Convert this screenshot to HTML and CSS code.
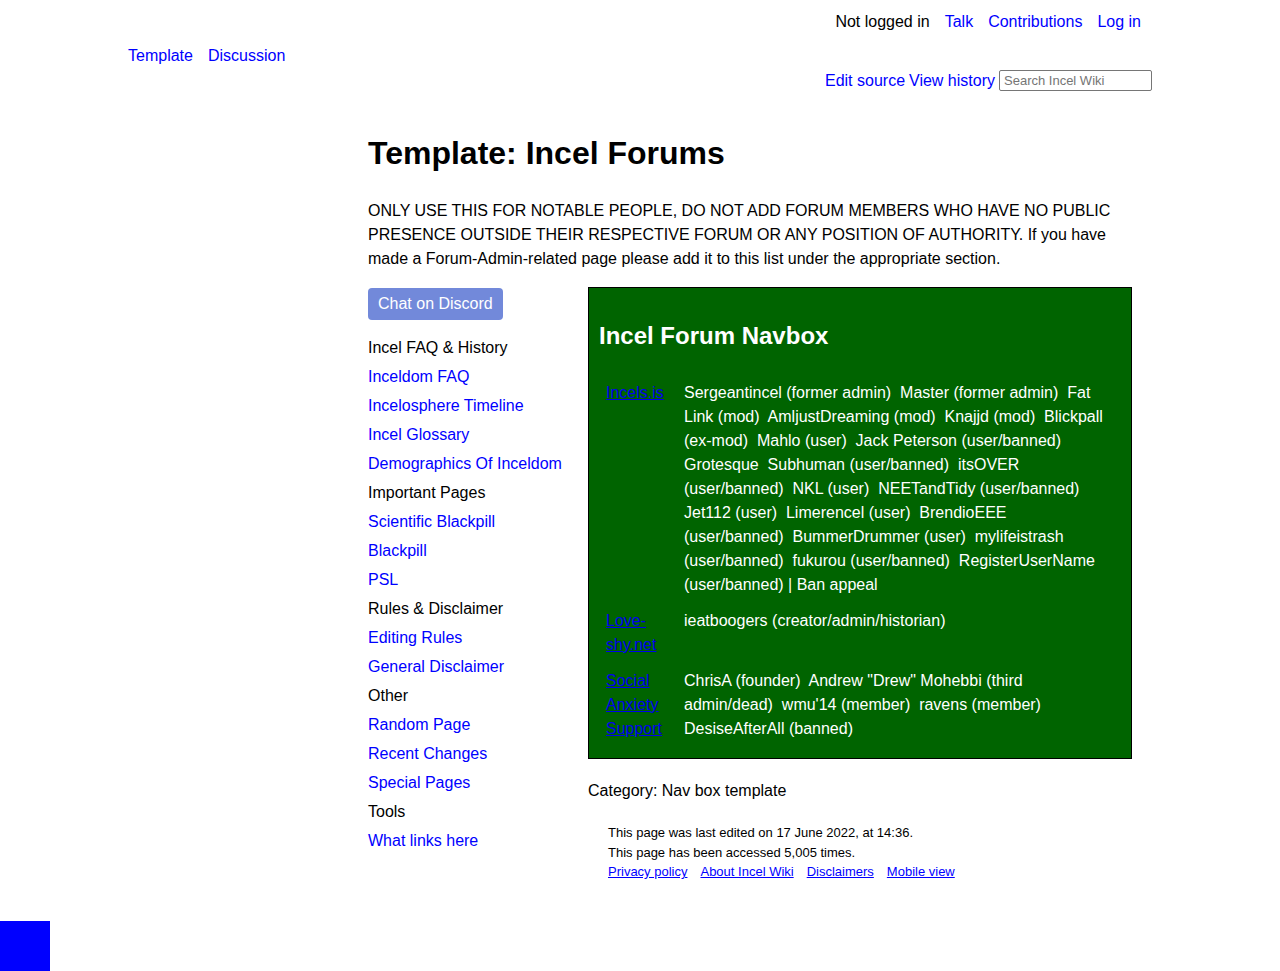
FILE: index.html
```html
<!DOCTYPE html>
<html lang="en">
<head>
<meta charset="utf-8">
<title>Template: Incel Forums - Incel Wiki</title>
<link rel="stylesheet" href="styles.css">
</head>
<body>
<div class="page">
  <header class="header">
    <ul class="user-links">
      <li class="plain">Not logged in</li>
      <li><a href="#">Talk</a></li>
      <li><a href="#">Contributions</a></li>
      <li><a href="#">Log in</a></li>
    </ul>
    <ul class="ns-links">
      <li><a href="#">Template</a></li>
      <li><a href="#">Discussion</a></li>
    </ul>
    <div class="actions">
      <a href="#">Edit source</a> <a href="#">View history</a>
      <input class="search" type="text" placeholder="Search Incel Wiki">
    </div>
  </header>

  <main class="content">
    <h1 class="title">Template: Incel Forums</h1>
    <p class="intro">ONLY USE THIS FOR NOTABLE PEOPLE, DO NOT ADD FORUM MEMBERS WHO HAVE NO PUBLIC PRESENCE OUTSIDE THEIR RESPECTIVE FORUM OR ANY POSITION OF AUTHORITY. If you have made a Forum-Admin-related page please add it to this list under the appropriate section.</p>

    <div class="columns">
      <nav class="sidebar">
        <a class="discord" href="#">Chat on Discord</a>
        <ul class="side-list">
          <li class="head">Incel FAQ &amp; History</li>
          <li><a href="#">Inceldom FAQ</a></li>
          <li><a href="#">Incelosphere Timeline</a></li>
          <li><a href="#">Incel Glossary</a></li>
          <li><a href="#">Demographics Of Inceldom</a></li>
          <li class="head">Important Pages</li>
          <li><a href="#">Scientific Blackpill</a></li>
          <li><a href="#">Blackpill</a></li>
          <li><a href="#">PSL</a></li>
          <li class="head">Rules &amp; Disclaimer</li>
          <li><a href="#">Editing Rules</a></li>
          <li><a href="#">General Disclaimer</a></li>
          <li class="head">Other</li>
          <li><a href="#">Random Page</a></li>
          <li><a href="#">Recent Changes</a></li>
          <li><a href="#">Special Pages</a></li>
          <li class="head">Tools</li>
          <li><a href="#">What links here</a></li>
        </ul>
      </nav>

      <div class="main">
        <div class="navbox">
          <h2 class="navbox-title">Incel Forum Navbox</h2>
          <table class="navbox-table">
            <tr>
              <td class="label"><a href="#">Incels.is</a></td>
              <td class="list">Sergeantincel (former admin)&nbsp; Master (former admin)&nbsp; Fat Link (mod)&nbsp; AmljustDreaming (mod)&nbsp; Knajjd (mod)&nbsp; Blickpall (ex-mod)&nbsp; Mahlo (user)&nbsp; Jack Peterson (user/banned)&nbsp; Grotesque&nbsp; Subhuman (user/banned)&nbsp; itsOVER (user/banned)&nbsp; NKL (user)&nbsp; NEETandTidy (user/banned)&nbsp; Jet112 (user)&nbsp; Limerencel (user)&nbsp; BrendioEEE (user/banned)&nbsp; BummerDrummer (user)&nbsp; mylifeistrash (user/banned)&nbsp; fukurou (user/banned)&nbsp; RegisterUserName (user/banned) | Ban appeal</td>
            </tr>
            <tr>
              <td class="label"><a href="#">Love-shy.net</a></td>
              <td class="list">ieatboogers (creator/admin/historian)</td>
            </tr>
            <tr>
              <td class="label"><a href="#">Social Anxiety Support</a></td>
              <td class="list">ChrisA (founder)&nbsp; Andrew "Drew" Mohebbi (third admin/dead)&nbsp; wmu'14 (member)&nbsp; ravens (member)&nbsp; DesiseAfterAll (banned)</td>
            </tr>
          </table>
        </div>

        <div class="category">Category: Nav box template</div>

        <footer class="footer">
          <div>This page was last edited on 17 June 2022, at 14:36.</div>
          <div>This page has been accessed 5,005 times.</div>
          <div class="footer-links">
            <a href="#">Privacy policy</a>
            <a href="#">About Incel Wiki</a>
            <a href="#">Disclaimers</a>
            <a href="#">Mobile view</a>
          </div>
        </footer>
      </div>
    </div>
  </main>
</div>
<a class="corner" href="#" aria-label="Top"></a>
</body>
</html>
```

FILE: styles.css
```css
html, body {
  margin: 0;
  padding: 0;
  background: #ffffff;
}

body {
  font-family: "Liberation Sans", Arial, sans-serif;
  font-size: 16px;
  color: #000000;
}

a {
  color: #0000ff;
  text-decoration: none;
}

ul {
  list-style: none;
  margin: 0;
  padding: 0;
}

.page {
  width: 1024px;
  margin: 0 auto;
}

/* Header */
.header {
  display: flex;
  flex-direction: column;
  padding-top: 1px;
}

.user-links {
  display: flex;
  justify-content: flex-end;
  gap: 15px;
  height: 42px;
  line-height: 42px;
  padding-right: 11px;
}

.ns-links {
  display: flex;
  gap: 15px;
  height: 26px;
  line-height: 26px;
}

.actions {
  display: flex;
  justify-content: flex-end;
  align-items: center;
  gap: 4px;
  height: 24px;
  line-height: 24px;
  white-space: pre;
}

.search {
  width: 153px;
  height: 21px;
  box-sizing: border-box;
  border: 1px solid #767676;
  border-radius: 2px;
  padding: 1px 4px;
  font-family: "Liberation Sans", Arial, sans-serif;
  font-size: 13px;
  margin: -1px 0 0;
}

.search::placeholder {
  color: #757575;
}

/* Content */
.content {
  margin-left: 240px;
  width: 764px;
}

.title {
  font-size: 32px;
  line-height: 40px;
  font-weight: bold;
  margin: 40px 0 26px;
}

.intro {
  line-height: 24px;
  margin: 0 0 16px;
}

.columns {
  display: flex;
  align-items: flex-start;
}

.sidebar {
  width: 220px;
  flex: none;
  display: flex;
  flex-direction: column;
  align-items: flex-start;
  padding-top: 1px;
}

.discord {
  display: block;
  background: #7289da;
  color: #ffffff;
  border-radius: 4px;
  height: 32px;
  line-height: 32px;
  padding: 0 10px;
}

.side-list {
  margin-top: 13px;
}

.side-list li {
  line-height: 29px;
  height: 29px;
}

.main {
  width: 544px;
  flex: none;
}

.navbox {
  background: #006400;
  border: 1px solid #000000;
  padding: 10px;
  color: #ffffff;
}

.navbox-title {
  font-size: 24px;
  line-height: 28px;
  font-weight: bold;
  margin: 24px 0 24px;
}

.navbox-table {
  border-spacing: 2px;
  border-collapse: separate;
  width: 100%;
}

.navbox-table td {
  padding: 5px;
  vertical-align: top;
  line-height: 24px;
  color: #ffffff;
}

.navbox-table td.label {
  width: 66px;
}

.navbox-table td.list {
  padding-right: 11px;
}

.navbox-table td.label a {
  color: #0000ee;
  text-decoration: underline;
}

.category {
  line-height: 24px;
  margin-top: 20px;
}

.footer {
  font-size: 13px;
  line-height: 19.5px;
  margin: 20px 0 0 20px;
  padding-bottom: 40px;
}

.footer-links {
  display: flex;
  gap: 13px;
}

.footer-links a {
  text-decoration: underline;
}

.corner {
  position: fixed;
  left: 0;
  bottom: 0;
  width: 50px;
  height: 50px;
  background: #0000ff;
}
```
